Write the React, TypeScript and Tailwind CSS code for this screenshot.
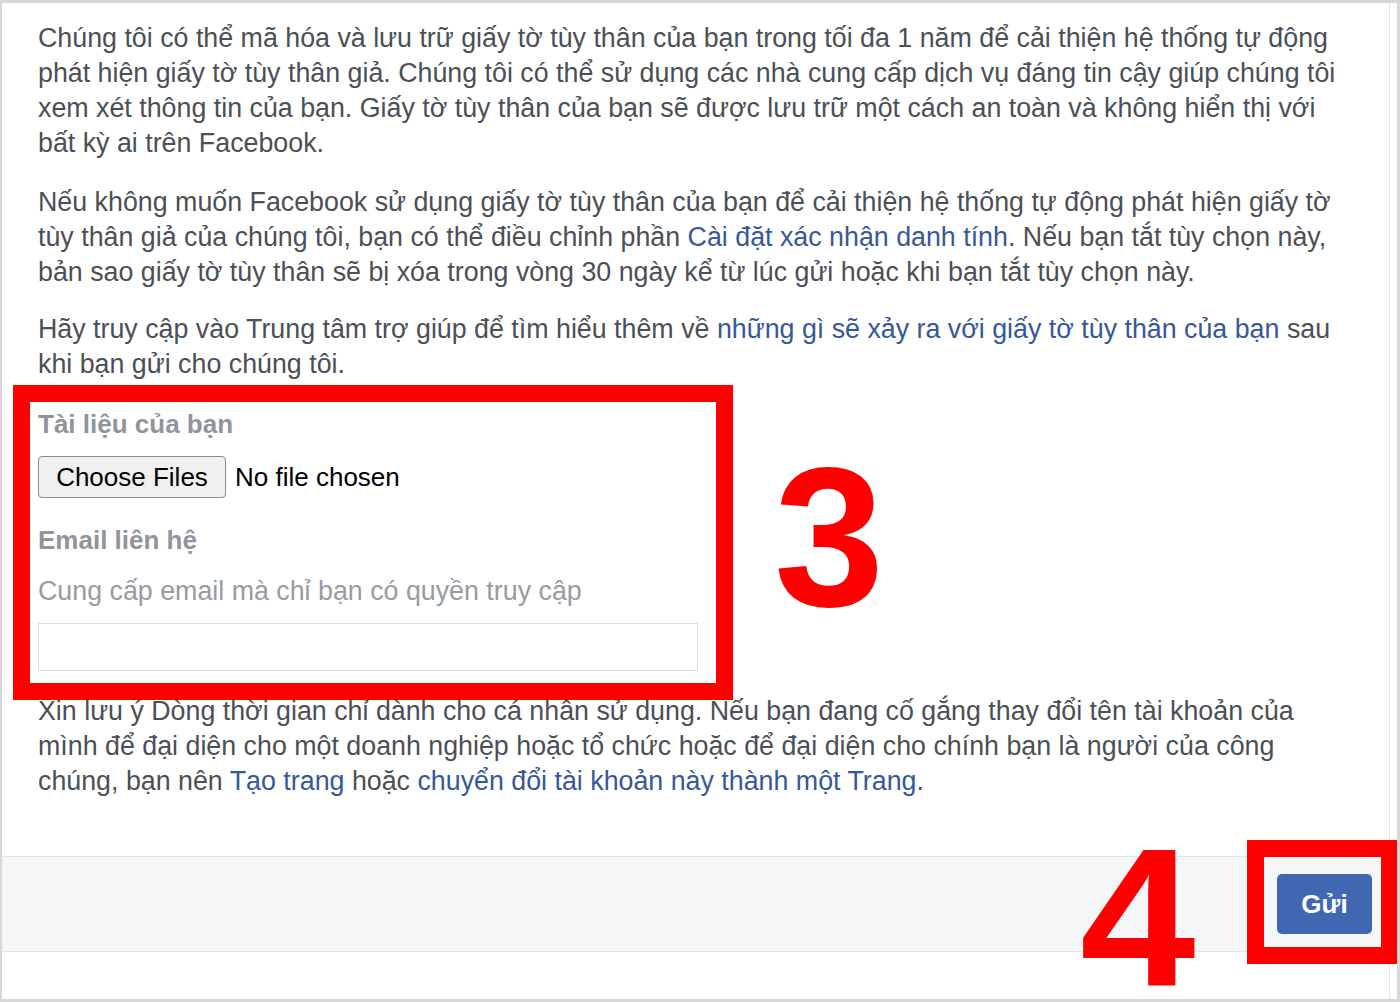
import React from 'react';

const font = { fontFamily: '"Liberation Sans", Arial, sans-serif' };

function Link({ children }: { children: React.ReactNode }) {
  return <a className="text-[#365899] cursor-pointer">{children}</a>;
}

export default function App() {
  return (
    <div
      className="relative w-[1400px] h-[1002px] bg-white border-t-[3px] border-l-[2px] border-r-[3px] border-b-[3px] border-[#d7d7d7] overflow-hidden"
      style={font}
    >
      <div className="w-[1388px] h-full border-r border-[#e6e7ea] flex flex-col">
        {/* Body */}
        <div className="pl-[36px] pt-[18px] text-[26.8px] leading-[35px] text-[#4b4f56] flex-1 whitespace-nowrap">
          <p className="mb-[24px]">
            Chúng tôi có thể mã hóa và lưu trữ giấy tờ tùy thân của bạn trong tối đa 1 năm để cải thiện hệ thống tự động
            <br />
            phát hiện giấy tờ tùy thân giả. Chúng tôi có thể sử dụng các nhà cung cấp dịch vụ đáng tin cậy giúp chúng tôi
            <br />
            xem xét thông tin của bạn. Giấy tờ tùy thân của bạn sẽ được lưu trữ một cách an toàn và không hiển thị với
            <br />
            bất kỳ ai trên Facebook.
          </p>
          <p className="mb-[22px]">
            Nếu không muốn Facebook sử dụng giấy tờ tùy thân của bạn để cải thiện hệ thống tự động phát hiện giấy tờ
            <br />
            tùy thân giả của chúng tôi, bạn có thể điều chỉnh phần <Link>Cài đặt xác nhận danh tính</Link>. Nếu bạn tắt tùy chọn này,
            <br />
            bản sao giấy tờ tùy thân sẽ bị xóa trong vòng 30 ngày kể từ lúc gửi hoặc khi bạn tắt tùy chọn này.
          </p>
          <p className="mb-[25px]">
            Hãy truy cập vào Trung tâm trợ giúp để tìm hiểu thêm về{' '}
            <Link>những gì sẽ xảy ra với giấy tờ tùy thân của bạn</Link> sau
            <br />
            khi bạn gửi cho chúng tôi.
          </p>

          {/* Upload */}
          <div className="font-bold text-[26px] text-[#90949c] mb-[14px]">Tài liệu của bạn</div>
          <div className="flex items-center gap-[9px] mb-[25px]">
            <button className="h-[42px] w-[188px] bg-[#efefef] border border-[#8a8a8a] rounded-[4px] text-black text-[26px] leading-none">
              Choose Files
            </button>
            <span className="text-black text-[26px]">No file chosen</span>
          </div>

          {/* Email */}
          <div className="font-bold text-[26px] text-[#90949c] mb-[16px]">Email liên hệ</div>
          <div className="text-[#979ba2] mb-[14px]">Cung cấp email mà chỉ bạn có quyền truy cập</div>
          <input
            type="text"
            className="block w-[660px] h-[48px] border border-[#dddfe2] outline-none mb-[23px]"
          />

          <p>
            Xin lưu ý Dòng thời gian chỉ dành cho cá nhân sử dụng. Nếu bạn đang cố gắng thay đổi tên tài khoản của
            <br />
            mình để đại diện cho một doanh nghiệp hoặc tổ chức hoặc để đại diện cho chính bạn là người của công
            <br />
            chúng, bạn nên <Link>Tạo trang</Link> hoặc <Link>chuyển đổi tài khoản này thành một Trang</Link>.
          </p>
        </div>

        {/* Footer */}
        <div className="h-[96px] bg-[#f5f6f7] border-t border-b border-[#e2e3e6] flex items-center justify-end pr-[17px] mb-[47px]">
          <button className="w-[95px] h-[60px] bg-[#4267b2] rounded-[5px] text-white font-bold text-[26px]">
            Gửi
          </button>
        </div>
      </div>

      {/* Annotations */}
      <div className="absolute left-[11px] top-[382px] w-[720px] h-[315px] border-[17px] border-[#ff0000]" />
      <div className="absolute left-[772px] top-[456px] text-[198px] leading-[0.8] font-bold text-[#ff0000]">3</div>
      <div className="absolute left-[1078px] top-[840px] text-[196px] leading-[0.78] font-bold text-[#ff0000] scale-x-[1.06] origin-left">4</div>
      <div className="absolute left-[1245px] top-[837px] w-[151px] h-[124px] border-[17px] border-[#ff0000]" />
    </div>
  );
}
